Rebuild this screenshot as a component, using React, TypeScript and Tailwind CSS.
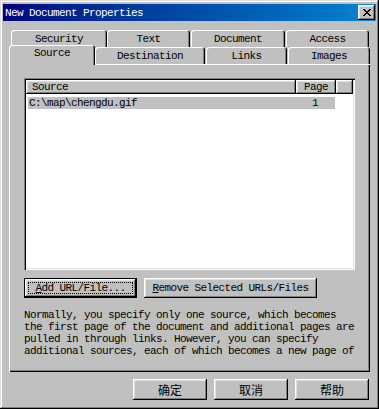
import React from "react";

const raised =
  "shadow-[inset_-1px_-1px_#000,inset_1px_1px_#fff,inset_-2px_-2px_#808080,inset_2px_2px_#dfdfdf]";
const tabEdge =
  "shadow-[inset_1px_1px_#fff,inset_-1px_0_#000,inset_-2px_0_#808080] rounded-t-[3px]";
const mono = "font-['Liberation_Mono','DejaVu_Sans_Mono',monospace] text-[11px] tracking-[-0.6px] leading-[12px]";

function CloseGlyph() {
  const px: [number, number][] = [
    [0, 0], [1, 0], [6, 0], [7, 0],
    [1, 1], [2, 1], [5, 1], [6, 1],
    [2, 2], [3, 2], [4, 2], [5, 2],
    [3, 3], [4, 3],
    [2, 4], [3, 4], [4, 4], [5, 4],
    [1, 5], [2, 5], [5, 5], [6, 5],
    [0, 6], [1, 6], [6, 6], [7, 6],
  ];
  return (
    <svg width="8" height="7" viewBox="0 0 8 7" shapeRendering="crispEdges">
      {px.map(([x, y], i) => (
        <rect key={i} x={x} y={y} width="1" height="1" fill="#000" />
      ))}
    </svg>
  );
}

function Tab({ label, w, ml = 0 }: { label: string; w: number; ml?: number }) {
  return (
    <div
      className={`h-[17px] bg-[#c0c0c0] ${tabEdge} flex items-center justify-center`}
      style={{ width: w, marginLeft: ml }}
    >
      {label}
    </div>
  );
}

export default function App() {
  const backTabs = [
    { label: "Security", w: 96, ml: 2 },
    { label: "Text", w: 83, ml: 0 },
    { label: "Document", w: 94, ml: 1 },
    { label: "Access", w: 83, ml: 1 },
  ];

  const lines = [
    "Normally, you specify only one source, which becomes",
    "the first page of the document and additional pages are",
    "pulled in through links. However, you can specify",
    "additional sources, each of which becomes a new page of",
  ];

  return (
    <div
      className={`w-[379px] h-[409px] bg-[#c0c0c0] pt-[4px] px-[3px] text-black ${mono} shadow-[inset_-1px_-1px_#000,inset_1px_1px_#dfdfdf,inset_-2px_-2px_#808080,inset_2px_2px_#fff] overflow-hidden`}
    >
      {/* Title bar */}
      <div className="h-[17px] bg-gradient-to-r from-[#000080] to-[#1084d0] flex items-center pl-[2px] pr-[1px]">
        <span className="text-white">New Document Properties</span>
        <div className={`ml-auto w-[17px] h-[15px] bg-[#c0c0c0] ${raised} flex items-center justify-center`}>
          <CloseGlyph />
        </div>
      </div>

      <div className="ml-[6px] w-[361px]">
        {/* Tabs */}
        <div className="mt-[9px] flex">
          {backTabs.map((t) => (
            <Tab key={t.label} {...t} />
          ))}
        </div>
        <div className="h-[17px] flex items-start">
          <div
            className={`relative z-10 -mt-[2px] h-[20px] w-[86px] bg-[#c0c0c0] ${tabEdge} flex items-start justify-center pt-[2px]`}
          >
            Source
          </div>
          <Tab label="Destination" w={110} ml={0} />
          <Tab label="Links" w={81} ml={1} />
          <Tab label="Images" w={82} ml={1} />
        </div>

        {/* Panel */}
        <div className="h-[308px] shadow-[inset_1px_1px_#fff,inset_-1px_-1px_#000,inset_-2px_-2px_#808080] pl-[15px] pt-[14px]">
          <div className="w-[331px] h-[192px] bg-white p-[2px] shadow-[inset_1px_1px_#808080,inset_2px_2px_#000,inset_-1px_-1px_#fff,inset_-2px_-2px_#dfdfdf]">
            <div className="flex h-[14px]">
              <div className={`w-[270px] bg-[#c0c0c0] ${raised} pl-[6px] flex items-center`}>Source</div>
              <div className={`w-[40px] bg-[#c0c0c0] ${raised} flex items-center justify-center`}>Page</div>
              <div className={`flex-1 bg-[#c0c0c0] ${raised}`} />
            </div>
            <div className="mt-[3px] ml-[2px] w-[307px] h-[12px] bg-[#c0c0c0] flex items-center">
              <span className="w-[268px] pl-[1px]">C:\map\chengdu.gif</span>
              <span className="w-[40px] text-center">1</span>
            </div>
          </div>

          <div className="mt-[8px] flex gap-[7px]">
            <div className="w-[113px] h-[20px] border border-black bg-[#c0c0c0]">
              <div className={`w-full h-full ${raised} p-[3px]`}>
                <div className="w-full h-full border border-dotted border-black flex items-center justify-center">
                  <span>
                    <span className="underline underline-offset-[1px]">A</span>dd URL/File...
                  </span>
                </div>
              </div>
            </div>
            <div className={`w-[173px] h-[20px] bg-[#c0c0c0] ${raised} flex items-center justify-center`}>
              <span>
                <span className="underline underline-offset-[1px]">R</span>emove Selected URLs/Files
              </span>
            </div>
          </div>

          <div className="mt-[11px] whitespace-pre">
            {lines.map((l) => (
              <div key={l}>{l}</div>
            ))}
          </div>
        </div>
      </div>

      {/* Dialog buttons */}
      <div className="mt-[7px] flex justify-end gap-[7px] pr-[7px] font-['Noto_Sans_CJK_SC',sans-serif] text-[12px] tracking-normal">
        {["确定", "取消", "帮助"].map((b) => (
          <div key={b} className={`w-[74px] h-[21px] bg-[#c0c0c0] ${raised} flex items-center justify-center`}>
            {b}
          </div>
        ))}
      </div>
    </div>
  );
}
